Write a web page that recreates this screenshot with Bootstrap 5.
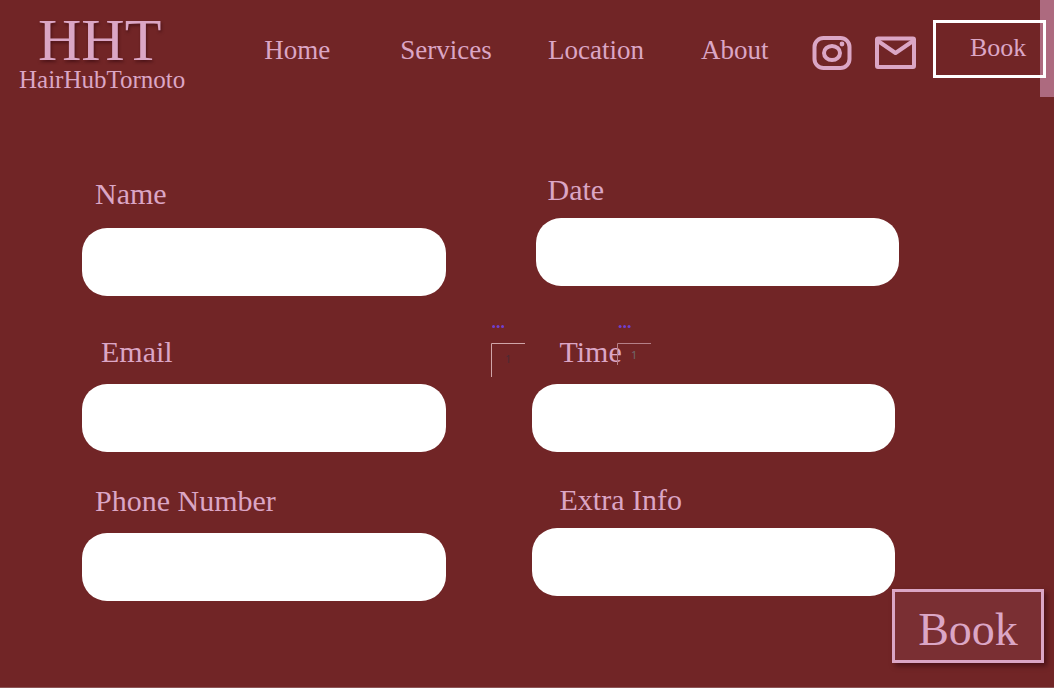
<!DOCTYPE html>
<html lang="en">
<head>
<meta charset="utf-8">
<meta name="viewport" content="width=device-width, initial-scale=1">
<title>HairHubTornoto – Book</title>
<link href="https://cdn.jsdelivr.net/npm/bootstrap@5.3.0/dist/css/bootstrap.min.css" rel="stylesheet">
<style>
  :root { --wine: #712526; --pink: #dba6c5; }
  body { background: var(--wine); color: var(--pink); font-family: "Liberation Serif", "Times New Roman", serif; min-height: 100vh; border-bottom: 1px solid #8d5556; }
  a, a:hover { color: var(--pink); text-decoration: none; }

  .site-header { height: 97px; }
  .edge-strip { width: 14px; height: 97px; background: #ad6a7f; }
  .brand { width: 19%; padding-left: 19px; padding-top: 10px; }
  .brand-mark { font-size: 60px; line-height: 60px; margin-left: 19px; text-shadow: 1px 2px 3px rgba(40, 0, 10, .5); }
  .brand-name { font-size: 25px; line-height: 20px; }
  .main-links { font-size: 27px; line-height: 32px; padding-top: 34px; flex: 1; display: grid; grid-template-columns: 136fr 148fr 153fr 111fr; padding-left: 64px; }
  .social { gap: 21px; padding-top: 33px; margin-right: 16px; }
  .book-link { position: relative; width: 113px; height: 58px; margin: 20px 8px 0 0; border: 3px solid #fff; font-size: 26px; line-height: 50px; padding-left: 34px; }

  .booking { padding: 75px 0 0 82px; }
  .field-column { width: calc(37.5% - 1px); }
  .field-column + .field-column { margin-left: 86px; }
  .field label { display: block; font-size: 30px; line-height: 36px; margin-bottom: 14px; padding-left: 13px; }
  .field .form-control { height: 68px; border: 0; border-radius: 25px; font-size: 27px; padding: 0 24px; }
  .stack-left { padding-top: 4px; }
  .stack-left .field { margin-bottom: 31px; }
  .stack-left .field:first-child { margin-bottom: 38px; }
  .stack-left .field:first-child label { margin-bottom: 16px; }
  .stack-left .field:nth-child(2) label { padding-left: 19px; }
  .stack-right .field { margin-bottom: 30px; }
  .stack-right .field:first-child { margin-bottom: 48px; margin-left: 4px; margin-right: -4px; }
  .stack-right label { padding-left: 28px; margin-bottom: 10px; }
  .stack-right .field:first-child label { padding-left: 12px; }
  .stack-right .field:nth-child(2) label { margin-bottom: 14px; }
  .booking .field:last-child { margin-bottom: 0; }

  .marker { position: absolute; top: 317px; width: 34px; pointer-events: none; font: 11px/12px "Noto Sans", sans-serif; }
  .marker svg { display: block; }
  .marker-a { left: 491px; color: #4c2a34; }
  .marker-b { left: 617px; color: #70696c; }
  .marker span { position: absolute; left: 14px; top: 36px; }
  .marker-b span { top: 32px; }

  .submit-button { position: absolute; right: 10px; bottom: 24px; width: 152px; height: 74px; border: 3px solid var(--pink); background: #7a2f33; color: var(--pink); font-size: 46px; line-height: 60px; padding: 8px 0 0; box-shadow: 3px 3px 5px rgba(40, 0, 10, .5); }
</style>
</head>
<body class="position-relative">
<header class="site-header position-relative d-flex align-items-start">
  <div class="edge-strip position-absolute top-0 end-0"></div>
  <a class="brand d-block" href="#">
    <div class="brand-mark">HHT</div>
    <div class="brand-name">HairHubTornoto</div>
  </a>
  <nav class="main-links" aria-label="Main">
    <a href="#">Home</a>
    <a href="#">Services</a>
    <a href="#">Location</a>
    <a href="#">About</a>
  </nav>
  <div class="social d-flex">
    <a href="#" aria-label="Instagram"><svg class="d-block" width="42" height="40" viewBox="0 0 42 40" fill="none" stroke="#dba6c5" stroke-width="4"><rect x="2.500" y="5" width="35" height="30" rx="9"/><ellipse cx="20" cy="20" rx="8" ry="7"/><circle cx="30" cy="11" r="2.400" fill="#dba6c5" stroke="none"/></svg></a>
    <a href="#" aria-label="Email"><svg class="d-block" width="42" height="40" viewBox="0 0 42 40" fill="none" stroke="#dba6c5" stroke-width="4" stroke-linejoin="round"><rect x="2" y="5.500" width="37" height="28.500" rx="1"/><path d="M3 8l17.500 12L38 8"/></svg></a>
  </div>
  <a class="book-link" href="#">Book</a>
</header>

<main>
  <form class="booking d-flex">
    <div class="field-column stack-left">
      <div class="field"><label for="name">Name</label><input class="form-control" id="name" type="text"></div>
      <div class="field"><label for="email">Email</label><input class="form-control" id="email" type="email"></div>
      <div class="field"><label for="phone">Phone Number</label><input class="form-control" id="phone" type="tel"></div>
    </div>
    <div class="field-column stack-right">
      <div class="field"><label for="date">Date</label><input class="form-control" id="date" type="text"></div>
      <div class="field"><label for="time">Time</label><input class="form-control" id="time" type="text"></div>
      <div class="field"><label for="extra">Extra Info</label><input class="form-control" id="extra" type="text"></div>
    </div>
    <button class="submit-button" type="submit">Book</button>
  </form>
  <div class="marker marker-a"><svg width="34" height="60" viewBox="0 0 34 60"><g fill="#6f3fd0"><circle cx="2.500" cy="9.500" r="1.500"/><circle cx="7" cy="9.500" r="1.500"/><circle cx="11.500" cy="9.500" r="1.500"/></g><path d="M.5 60V26.500H34" fill="none" stroke="#d0a5a8"/></svg><span>1</span></div>
  <div class="marker marker-b"><svg width="34" height="60" viewBox="0 0 34 60"><g fill="#6f3fd0"><circle cx="3" cy="9.500" r="1.500"/><circle cx="7.500" cy="9.500" r="1.500"/><circle cx="12" cy="9.500" r="1.500"/></g><path d="M.5 48V26.500H34" fill="none" stroke="#b58088"/></svg><span>1</span></div>
</main>
<script src="https://cdn.jsdelivr.net/npm/bootstrap@5.3.0/dist/js/bootstrap.bundle.min.js"></script>
</body>
</html>
